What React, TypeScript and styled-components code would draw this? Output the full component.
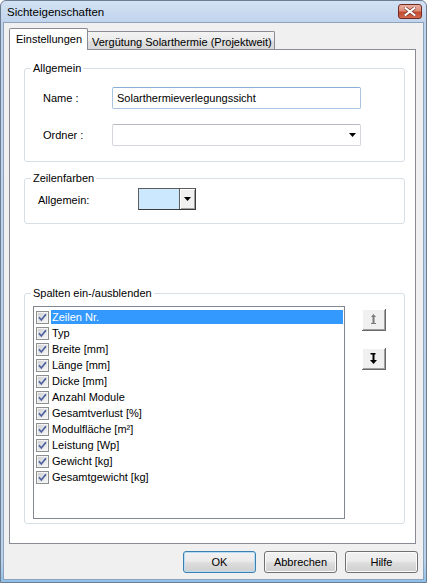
import React from "react";
import styled, { createGlobalStyle } from "styled-components";

const Global = createGlobalStyle`
  html, body { margin: 0; padding: 0; background: #ffffff; }
  body { font-family: "Liberation Sans", Arial, sans-serif; font-size: 11px; color: #000; }
  * { box-sizing: border-box; }
`;

const Window = styled.div`
  width: 427px;
  height: 583px;
  display: flex;
  flex-direction: column;
  border: 1px solid #6d7d92;
  border-radius: 6px 6px 0 0;
  padding: 0 2px 2px 2px;
  background: linear-gradient(#d3e2f4, #bfd3ec 22px, #b9d1ea 560px, #8fc0ea);
  overflow: hidden;
`;

const TitleBar = styled.div`
  height: 21px;
  flex: none;
  display: flex;
  align-items: center;
  justify-content: space-between;
  padding: 0 2px 0 4px;
  font-size: 11.5px;
  color: #000;
`;

const CloseButton = styled.div`
  width: 24px;
  height: 15px;
  border: 1px solid #6f2b20;
  border-radius: 3px;
  background: linear-gradient(#eab0a2 0%, #dc8d7a 45%, #c4482d 55%, #cf6a50 100%);
  display: flex;
  align-items: center;
  justify-content: center;
`;

const Client = styled.div`
  flex: 1;
  display: flex;
  flex-direction: column;
  border: 1px solid #8da3bd;
  background: #f0f0f0;
  padding: 5px 0 0 5px;
`;

const TabStrip = styled.div`
  display: flex;
  align-items: flex-end;
  height: 21px;
  flex: none;
`;

const Tab = styled.div<{ $active?: boolean }>`
  position: relative;
  white-space: nowrap;
  ${(p) =>
    p.$active
      ? `
    width: 79px;
    height: 22px;
    margin-bottom: -1px;
    border: 1px solid #898c95;
    border-bottom: none;
    border-radius: 2px 2px 0 0;
    background: #ffffff;
    padding: 0 0 0 6px;
    line-height: 20px;
  `
      : `
    width: 187px;
    height: 18px;
    border-top: 1px solid #898c95;
    border-right: 1px solid #898c95;
    border-radius: 0 2px 0 0;
    background: linear-gradient(#f3f3f3, #ebebeb 50%, #dedede 51%, #d8d8d8);
    padding: 2px 0 0 4px;
    line-height: 16px;
  `}
`;

const Panel = styled.div`
  width: 407px;
  height: 495px;
  flex: none;
  border: 1px solid #898c95;
  background: #ffffff;
  padding: 0 10px 0 14px;
  display: flex;
  flex-direction: column;
`;

const Group = styled.div<{ $h: number; $mt: number }>`
  flex: none;
  margin-top: ${(p) => p.$mt}px;
  height: ${(p) => p.$h}px;
  border: 1px solid #d5dfe5;
  border-radius: 3px;
`;

const GroupTitle = styled.div`
  width: fit-content;
  height: 13px;
  line-height: 13px;
  margin: -7px 0 0 6px;
  padding: 0 2px;
  background: #ffffff;
`;

const FormGrid = styled.div`
  display: grid;
  grid-template-columns: 69px 249px;
  grid-auto-rows: 22px;
  row-gap: 15px;
  align-items: center;
  padding: 12px 0 0 18px;
`;

const Label = styled.span``;

const TextInput = styled.div`
  height: 22px;
  border: 1px solid #a9c4e0;
  border-top-color: #8aafd6;
  border-radius: 2px;
  background: #ffffff;
  padding: 0 0 0 4px;
  line-height: 20px;
`;

const Combo = styled.div`
  height: 22px;
  border: 1px solid #d3d6db;
  border-top-color: #b8bcc2;
  border-radius: 2px;
  background: #ffffff;
  display: flex;
  align-items: center;
  justify-content: flex-end;
  padding-right: 4px;
`;

const ColorRow = styled.div`
  display: flex;
  align-items: flex-start;
  padding: 3px 0 0 13px;
`;

const ColorLabel = styled.span`
  width: 100px;
  margin-top: 6px;
  line-height: 13px;
`;

const ColorPicker = styled.div`
  width: 58px;
  height: 22px;
  display: flex;
  border: 1px solid #5c5c5c;
  border-right-color: #3a3a3a;
  border-bottom-color: #3a3a3a;
`;

const Swatch = styled.div<{ $color: string }>`
  flex: 1;
  background: ${(p) => p.$color};
  border-right: 1px solid #5c5c5c;
`;

const DropPart = styled.div`
  width: 15px;
  background: #f0f0f0;
  box-shadow: inset 1px 1px #ffffff, inset -1px -1px #a0a0a0;
  display: flex;
  align-items: center;
  justify-content: center;
`;

const ColumnsArea = styled.div`
  display: flex;
  align-items: flex-start;
  gap: 17px;
  padding: 6px 0 0 8px;
`;

const ListBox = styled.div`
  width: 312px;
  height: 213px;
  border: 1px solid #828790;
  background: #ffffff;
  padding: 2px 1px 0 2px;
`;

const ListRow = styled.div`
  display: flex;
  align-items: center;
  height: 16px;
  gap: 2px;
`;

const ItemText = styled.span<{ $selected?: boolean }>`
  flex: 1;
  height: 14px;
  line-height: 14px;
  padding-left: 1px;
  white-space: nowrap;
  background: ${(p) => (p.$selected ? "#3399ff" : "transparent")};
  color: ${(p) => (p.$selected ? "#ffffff" : "#000000")};
`;

const SideButtons = styled.div`
  display: flex;
  flex-direction: column;
  gap: 17px;
  margin-top: 3px;
`;

const SmallButton = styled.div`
  width: 24px;
  height: 22px;
  background: #f0f0f0;
  border-right: 1px solid #696969;
  border-bottom: 1px solid #696969;
  box-shadow: inset 1px 1px #ffffff, inset -1px -1px #a0a0a0;
  display: flex;
  align-items: center;
  justify-content: center;
`;

const ButtonRow = styled.div`
  display: flex;
  justify-content: flex-end;
  gap: 8px;
  margin-top: 7px;
  padding-right: 5px;
`;

const DialogButton = styled.div<{ $default?: boolean }>`
  width: 73px;
  height: 22px;
  border: 1px solid ${(p) => (p.$default ? "#3c7fb1" : "#707070")};
  border-radius: 3px;
  background: linear-gradient(#f2f2f2, #ebebeb 45%, #dddddd 55%, #cfcfcf);
  box-shadow: inset 0 0 0 1px ${(p) => (p.$default ? "#b7dcf3" : "#fbfbfb")};
  display: flex;
  align-items: center;
  justify-content: center;
`;

const CheckBox = () => (
  <svg width="13" height="13" viewBox="0 0 13 13" style={{ flex: "none" }}>
    <defs>
      <linearGradient id="cbg" x1="0" y1="0" x2="1" y2="1">
        <stop offset="0" stopColor="#cfd1d4" />
        <stop offset="1" stopColor="#f5f5f5" />
      </linearGradient>
    </defs>
    <rect x="0.5" y="0.5" width="12" height="12" fill="#f4f4f4" stroke="#8e8f8f" />
    <rect x="2" y="2" width="9" height="9" fill="url(#cbg)" />
    <path d="M3 6.2 L5.3 9 L10 3.2" fill="none" stroke="#4d5f9e" strokeWidth="1.7" />
  </svg>
);

const DownTriangle = ({ w = 7 }: { w?: number }) => (
  <svg width={w} height={4} viewBox={`0 0 ${w} 4`}>
    <path d={`M0 0 H${w} L${w / 2} 4 Z`} fill="#000" />
  </svg>
);

const UpIcon = () => (
  <svg width="7" height="11" viewBox="0 0 7 11">
    <path d="M3.5 0 L6 3 H4.5 V9 H6 V10 H1 V9 H2.5 V3 H1 Z" fill="#7a7a7a" />
  </svg>
);

const DownIcon = () => (
  <svg width="9" height="12" viewBox="0 0 9 12">
    <path d="M1.5 0 H6.5 V1.5 H5.5 V7 H8 L4.5 11 L1 7 H3.5 V1.5 H1.5 Z" fill="#000" />
  </svg>
);

const CloseX = () => (
  <svg width="12" height="9" viewBox="0 0 12 9">
    <path d="M1.5 1 L10.5 8 M10.5 1 L1.5 8" stroke="#7b3a2e" strokeWidth="3.4" strokeLinecap="square" />
    <path d="M1.5 1 L10.5 8 M10.5 1 L1.5 8" stroke="#ffffff" strokeWidth="2" strokeLinecap="square" />
  </svg>
);

const columns = [
  "Zeilen Nr.",
  "Typ",
  "Breite [mm]",
  "Länge [mm]",
  "Dicke [mm]",
  "Anzahl Module",
  "Gesamtverlust [%]",
  "Modulfläche [m²]",
  "Leistung [Wp]",
  "Gewicht [kg]",
  "Gesamtgewicht [kg]",
];

export default function App() {
  return (
    <>
      <Global />
      <Window>
        <TitleBar>
          <span>Sichteigenschaften</span>
          <CloseButton>
            <CloseX />
          </CloseButton>
        </TitleBar>
        <Client>
          <TabStrip>
            <Tab $active>Einstellungen</Tab>
            <Tab>Vergütung Solarthermie (Projektweit)</Tab>
          </TabStrip>
          <Panel>
            <Group $mt={18} $h={94}>
              <GroupTitle>Allgemein</GroupTitle>
              <FormGrid>
                <Label>Name :</Label>
                <TextInput>Solarthermieverlegungssicht</TextInput>
                <Label>Ordner :</Label>
                <Combo>
                  <DownTriangle />
                </Combo>
              </FormGrid>
            </Group>
            <Group $mt={16} $h={46}>
              <GroupTitle>Zeilenfarben</GroupTitle>
              <ColorRow>
                <ColorLabel>Allgemein:</ColorLabel>
                <ColorPicker>
                  <Swatch $color="#cce8ff" />
                  <DropPart>
                    <DownTriangle />
                  </DropPart>
                </ColorPicker>
              </ColorRow>
            </Group>
            <Group $mt={69} $h={231}>
              <GroupTitle>Spalten ein-/ausblenden</GroupTitle>
              <ColumnsArea>
                <ListBox>
                  {columns.map((c, i) => (
                    <ListRow key={c}>
                      <CheckBox />
                      <ItemText $selected={i === 0}>{c}</ItemText>
                    </ListRow>
                  ))}
                </ListBox>
                <SideButtons>
                  <SmallButton>
                    <UpIcon />
                  </SmallButton>
                  <SmallButton>
                    <DownIcon />
                  </SmallButton>
                </SideButtons>
              </ColumnsArea>
            </Group>
          </Panel>
          <ButtonRow>
            <DialogButton $default>OK</DialogButton>
            <DialogButton>Abbrechen</DialogButton>
            <DialogButton>Hilfe</DialogButton>
          </ButtonRow>
        </Client>
      </Window>
    </>
  );
}
